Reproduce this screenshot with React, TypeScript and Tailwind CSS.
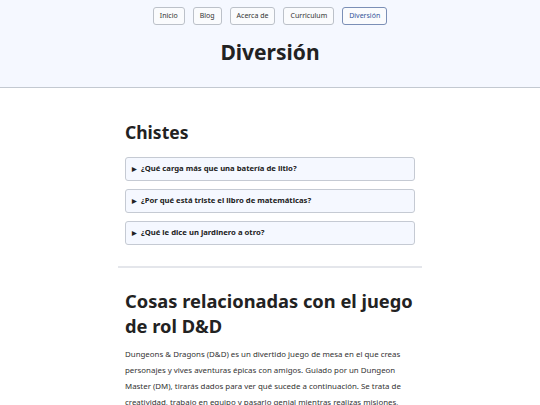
import React from "react";

const nav = ["Inicio", "Blog", "Acerca de", "Curriculum", "Diversión"];
const jokes = [
  "¿Qué carga más que una batería de litio?",
  "¿Por qué está triste el libro de matemáticas?",
  "¿Qué le dice un jardinero a otro?",
];

export default function App() {
  return (
    <div className="min-h-[405px] bg-white text-[#222] font-['Noto_Sans',sans-serif]">
      <header className="bg-[#f5f8ff] border-b border-[#c3c9d1] pt-[7px] pb-[20px]">
        <nav className="flex justify-center gap-[8px]">
          {nav.map((n) => (
            <span
              key={n}
              className={`h-[18px] px-[6px] flex items-center text-[7px] rounded-[3px] border bg-[#fafbfd] ${
                n === "Diversión" ? "border-[#7b8fb6] text-[#34559a]" : "border-[#bcc1c9] text-[#333]"
              }`}
            >
              {n}
            </span>
          ))}
        </nav>
        <h1 className="text-center text-[21px] font-bold leading-[30px] mt-[12px] text-[#222]">Diversión</h1>
      </header>
      <main className="w-[304px] mx-auto">
        <section className="px-[7px] pt-[32px] pb-[21px]">
          <h2 className="text-[17.5px] font-bold leading-[24px] mb-[13px]">Chistes</h2>
          <div className="flex flex-col gap-[8px]">
            {jokes.map((j) => (
              <div
                key={j}
                className="h-[24px] flex items-center px-[6px] border border-[#c5cad3] rounded-[3px] bg-[#f5f8ff] text-[7.7px] font-bold text-[#222]"
              >
                <span className="text-[6px] mr-[4px]">▶</span>
                {j}
              </div>
            ))}
          </div>
        </section>
        <hr className="border-0 h-[2px] bg-[#e4e6eb]" />
        <section className="px-[7px] pt-[20px]">
          <h2 className="text-[18.3px] font-bold leading-[25px] mb-[8px]">Cosas relacionadas con el juego de rol D&amp;D</h2>
          <p className="text-[7.9px] leading-[16px] text-[#333]">
            Dungeons &amp; Dragons (D&amp;D) es un divertido juego de mesa en el que creas personajes y vives aventuras épicas con amigos. Guiado por un Dungeon Master (DM), tirarás dados para ver qué sucede a continuación. Se trata de creatividad, trabajo en equipo y pasarlo genial mientras realizas misiones, luchas contra monstruos y encuentras tesoros increíbles.
          </p>
        </section>
      </main>
    </div>
  );
}
